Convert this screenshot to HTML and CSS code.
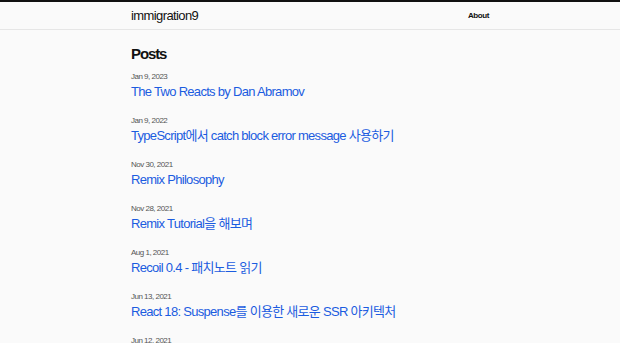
FILE: index.html
```html
<!DOCTYPE html>
<html lang="ko">
<head>
    <meta charset="UTF-8">
    <meta name="viewport" content="width=device-width, initial-scale=1.0">
    <title>immigration9</title>
    <link rel="stylesheet" href="styles.css">
</head>
<body>
    <header class="site-header">
        <div class="header-inner">
            <a href="/" class="logo">immigration9</a>
            <nav class="nav">
                <a href="/about" class="nav-link">About</a>
            </nav>
        </div>
    </header>

    <main class="content">
        <h1 class="page-title">Posts</h1>
        <ul class="post-list">
            <li class="post-item">
                <span class="post-date">Jan 9, 2023</span>
                <a href="#" class="post-title">The Two Reacts by Dan Abramov</a>
            </li>
            <li class="post-item">
                <span class="post-date">Jan 9, 2022</span>
                <a href="#" class="post-title">TypeScript에서 catch block error message 사용하기</a>
            </li>
            <li class="post-item">
                <span class="post-date">Nov 30, 2021</span>
                <a href="#" class="post-title">Remix Philosophy</a>
            </li>
            <li class="post-item">
                <span class="post-date">Nov 28, 2021</span>
                <a href="#" class="post-title">Remix Tutorial을 해보며</a>
            </li>
            <li class="post-item">
                <span class="post-date">Aug 1, 2021</span>
                <a href="#" class="post-title">Recoil 0.4 - 패치노트 읽기</a>
            </li>
            <li class="post-item">
                <span class="post-date">Jun 13, 2021</span>
                <a href="#" class="post-title">React 18: Suspense를 이용한 새로운 SSR 아키텍처</a>
            </li>
            <li class="post-item">
                <span class="post-date">Jun 12, 2021</span>
                <a href="#" class="post-title">React 18 알아보기</a>
            </li>
        </ul>
    </main>
</body>
</html>
```

FILE: styles.css
```css
body {
    font-family: "Liberation Sans", Arial, "Noto Sans CJK KR", sans-serif;
    margin: 0;
    background-color: #fafafa;
    color: #111;
    border-top: 2px solid #111;
}
.site-header {
    border-bottom: 1px solid #e6e6e6;
}
.header-inner {
    max-width: 358px;
    margin: 0 auto;
    height: 27px;
    display: flex;
    align-items: center;
    justify-content: space-between;
}
.logo {
    font-size: 13px;
    letter-spacing: -0.6px;
    line-height: 16px;
    color: #111;
    text-decoration: none;
}
.nav {
    display: flex;
    align-items: center;
    font-size: 8px;
    line-height: 10px;
}
.nav-link {
    font-weight: bold;
    letter-spacing: -0.4px;
    color: #111;
    text-decoration: none;
}
.content {
    max-width: 358px;
    margin: 0 auto;
    padding-top: 14px;
}
.page-title {
    font-size: 15px;
    font-weight: bold;
    letter-spacing: -1.1px;
    margin: 0 0 7px 0;
    line-height: 20px;
}
.post-list {
    list-style: none;
    margin: 0;
    padding: 0;
}
.post-item {
    display: flex;
    flex-direction: column;
    align-items: flex-start;
    height: 44px;
}
.post-date {
    font-size: 8px;
    letter-spacing: -0.5px;
    color: #555;
    line-height: 12px;
}
.post-title {
    font-size: 13px;
    letter-spacing: -0.7px;
    color: #1b5ce0;
    text-decoration: none;
    line-height: 17px;
}
```
